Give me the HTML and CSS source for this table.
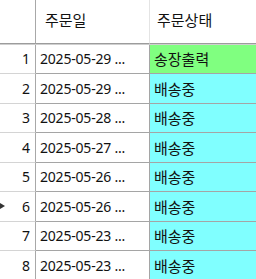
FILE: index.html
```html
<!DOCTYPE html>
<html lang="ko">
<head>
<meta charset="utf-8">
<link rel="stylesheet" href="styles.css">
</head>
<body>
<div class="grid">
  <div class="head">
    <div class="hc corner"></div>
    <div class="hc col1">주문일</div>
    <div class="hc col2">주문상태</div>
  </div>
  <div class="row"><div class="num">1</div><div class="date">2025-05-29 ...</div><div class="status s-green">송장출력</div></div>
  <div class="row"><div class="num">2</div><div class="date">2025-05-29 ...</div><div class="status s-cyan">배송중</div></div>
  <div class="row"><div class="num">3</div><div class="date">2025-05-28 ...</div><div class="status s-cyan">배송중</div></div>
  <div class="row"><div class="num">4</div><div class="date">2025-05-27 ...</div><div class="status s-cyan">배송중</div></div>
  <div class="row"><div class="num">5</div><div class="date">2025-05-26 ...</div><div class="status s-cyan">배송중</div></div>
  <div class="row"><div class="num current"><span class="arrow"></span>6</div><div class="date">2025-05-26 ...</div><div class="status s-cyan">배송중</div></div>
  <div class="row"><div class="num">7</div><div class="date">2025-05-23 ...</div><div class="status s-cyan">배송중</div></div>
  <div class="row"><div class="num">8</div><div class="date">2025-05-23 ...</div><div class="status s-cyan">배송중</div></div>
</div>
</body>
</html>
```
FILE: styles.css
```css
html, body {
  margin: 0;
  padding: 0;
  background: #fff;
  overflow: hidden;
}
.grid {
  width: 256px;
  font-family: "Noto Sans", "Noto Sans CJK KR", sans-serif;
  font-size: 14px;
  color: #111;
}
.head, .row {
  display: grid;
  grid-template-columns: 36px 114px 1fr;
}
.head {
  border-bottom: 1px solid #cfcfcf;
}
.hc {
  border-bottom: 1px solid #9c9c9c;
  display: flex;
  align-items: center;
  padding-bottom: 3px;
  box-sizing: content-box;
  background: #fff;
  font-size: 15px;
  height: 39.5px;
}
.corner {
  border-right: 1px solid #a8a8a8;
}
.col1 {
  border-right: 1px solid #e4e4e4;
  padding-left: 9px;
}
.col2 {
  padding-left: 7px;
}
.row > div {
  height: 28.5px;
  display: flex;
  align-items: center;
  border-bottom: 1px solid #a5a5a5;
  white-space: nowrap;
  overflow: hidden;
}
.num {
  justify-content: flex-end;
  padding-right: 5px;
  border-right: 1px solid #a8a8a8;
  border-bottom-color: #d4d4d4 !important;
  position: relative;
}
.date {
  padding-left: 4px;
  border-right: 1px solid #a5a5a5;
  letter-spacing: -0.2px;
}
.status {
  padding-left: 4px;
  font-size: 15px;
}
.s-green { background: #80ff80; }
.s-cyan { background: #80ffff; }
.arrow {
  position: absolute;
  left: 0;
  top: 50%;
  margin-top: -3px;
  width: 0;
  height: 0;
  border-left: 5px solid #333;
  border-top: 3px solid transparent;
  border-bottom: 3px solid transparent;
}
```
